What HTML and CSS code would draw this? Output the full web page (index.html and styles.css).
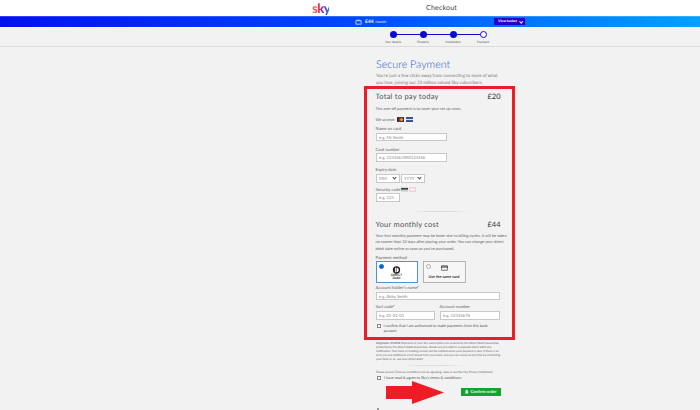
FILE: index.html
```html
<!DOCTYPE html>
<html lang="en">
<head>
    <meta charset="UTF-8">
    <title>Checkout</title>
    <link rel="stylesheet" href="styles.css">
</head>
<body>
    <header class="top">
        <span class="logo">sky</span>
        <span class="top-title">Checkout</span>
    </header>

    <div class="bar">
        <div class="bar-price">
            <svg class="tv" viewBox="0 0 8 6"><path d="M1 1.500h6v4H1zM2.500 0 4 1.500 5.500 0" fill="none" stroke="#fff" stroke-width="0.8"/></svg>
            <b>£44</b><span>/month</span>
        </div>
        <div class="basket">View basket <span class="caret"></span></div>
    </div>

    <nav class="steps">
        <div class="step done"><i></i><span>Your details</span></div>
        <div class="step done"><i></i><span>Property</span></div>
        <div class="step done"><i></i><span>Installation</span></div>
        <div class="step current"><i></i><span>Payment</span></div>
    </nav>

    <main class="page">
        <h1>Secure Payment</h1>
        <p class="intro">You're just a few clicks away from connecting to more of what<br>you love, joining our 23 million valued Sky subscribers.</p>

        <section class="pay-box">
            <div class="total">
                <h2>Total to pay today</h2><strong>£20</strong>
            </div>
            <p class="note">This one-off payment is to cover your set up costs.</p>

            <div class="accept">
                <span>We accept:</span>
                <svg class="card" viewBox="0 0 8 5"><rect width="8" height="5" fill="#222"/><circle cx="3" cy="2.500" r="1.600" fill="#d8232a"/><circle cx="5" cy="2.500" r="1.600" fill="#f39c12"/></svg>
                <svg class="card" viewBox="0 0 8 5"><rect width="8" height="5" fill="#1a2a78"/><rect y="1.700" width="8" height="1.600" fill="#d5ddee"/></svg>
            </div>

            <label class="first">Name on card</label>
            <div class="input w-name">e.g. Mr Smith</div>

            <label>Card number</label>
            <div class="input w-name">e.g. 1234567890123456</div>

            <label>Expiry date</label>
            <div class="expiry">
                <div class="input select">MM <span class="chev"></span></div>
                <div class="input select">YYYY <span class="chev"></span></div>
            </div>

            <label class="security">Security code
                <svg class="cvv" viewBox="0 0 8 5"><rect width="8" height="5" fill="#ccc"/><rect y="1" width="8" height="1.500" fill="#222"/></svg>
                <svg class="cvv" viewBox="0 0 8 5"><rect width="8" height="5" fill="#f3c6d0"/><rect x="1" y="1.500" width="6" height="2" fill="#fff"/></svg>
            </label>
            <div class="input w-short">e.g. 123</div>

            <hr class="rule">

            <div class="total monthly">
                <h2>Your monthly cost</h2><strong>£44</strong>
            </div>
            <p class="note long">Your first monthly payment may be lower due to billing cycles. It will be taken<br>no sooner than 10 days after placing your order. You can change your direct<br>debit date online as soon as you've purchased.</p>

            <label class="method">Payment method</label>
            <div class="tiles">
                <div class="tile selected">
                    <span class="radio on"></span>
                    <svg class="dd" viewBox="0 0 12 8"><circle cx="6" cy="4" r="4" fill="#222"/><path d="M6 1.500a2.500 2.500 0 0 1 0 5z" fill="#fff"/><path d="M4.300 1.500h1v5h-1z" fill="#fff"/></svg>
                    <b class="dd-text">DIRECT<br>Debit</b>
                </div>
                <div class="tile">
                    <span class="radio"></span>
                    <svg class="same" viewBox="0 0 8 6"><rect x="0.400" y="0.400" width="7.200" height="5.200" rx="0.600" fill="none" stroke="#222" stroke-width="0.700"/><rect y="1.300" width="8" height="1.100" fill="#222"/></svg>
                    <b>Use the same card</b>
                </div>
            </div>

            <label class="holder">Account holder's name*</label>
            <div class="input w-full">e.g. Abby Smith</div>

            <div class="two-col">
                <div>
                    <label>Sort code*</label>
                    <div class="input">e.g. 01-01-01</div>
                </div>
                <div>
                    <label>Account number</label>
                    <div class="input">e.g. 12345678</div>
                </div>
            </div>

            <div class="check confirm">
                <span class="box"></span>
                <span>I confirm that I am authorised to make payments from this bank<br>account</span>
            </div>
        </section>

        <div class="below">
            <p class="legal"><b>Originator 374078</b> Payments to your Sky subscription are covered by the Direct Debit Guarantee, protected by the Direct Debit Guarantee. Details are provided in a separate direct debit pre-notification. Your bank or building society will be notified when your payment is due. If there is an error you are entitled to a full refund from your bank, and you can cancel at any time by contacting your bank or us, see your direct debit.</p>
            <hr class="rule small">
            <p class="terms">Please ensure Terms &amp; Conditions are by agreeing, view or see the Sky Privacy Statement</p>
            <div class="check agree">
                <span class="box"></span>
                <span>I have read &amp; agree to Sky's terms &amp; conditions</span>
            </div>
            <div class="order">
                <div class="confirm-btn">
                    <svg class="lock" viewBox="0 0 6 7"><path d="M1.500 3V2a1.500 1.500 0 0 1 3 0v1M.8 3h4.400v4H.8z" fill="#cfeed3" stroke="#cfeed3" stroke-width="0.500"/></svg>
                    Confirm order
                </div>
            </div>
            <div class="more"></div>
        </div>
    </main>

    <!-- callout arrow pointing at the confirm button -->
    <svg class="arrow" viewBox="0 0 58 23"><path d="M0 5h26V0l32 11.500L26 23v-5H0z" fill="#ee1c25"/></svg>
</body>
</html>
```

FILE: styles.css
```css
html, body {
    margin: 0;
    padding: 0;
    height: 410px;
    overflow: hidden;
}

/* geometricPrecision keeps glyph advances fractional at these tiny sizes */
body {
    position: relative;
    font-family: "Lato", Arial, sans-serif;
    text-rendering: geometricPrecision;
    background-color: #f2f2f2;
    color: #555;
}

.top {
    height: 16px;
    background-color: #fff;
    position: relative;
    display: flex;
    align-items: center;
    padding-left: 312px;
}

.logo {
    font-weight: 900;
    font-size: 13px;
    line-height: 14px;
    letter-spacing: -0.5px;
    background: linear-gradient(90deg, #f2822b, #e8246e 45%, #5b3bd6 70%, #1d6fe8);
    -webkit-background-clip: text;
    background-clip: text;
    color: transparent;
    width: 17px;
}

.top-title {
    margin-left: 97px;
    font-size: 7px;
    letter-spacing: 0.2px;
    color: #444;
}

.bar {
    height: 11px;
    background: linear-gradient(90deg, #0010f0, #0047ff 50%, #00a2ff);
    box-shadow: inset 0 1px 0 rgba(255, 255, 255, 0.2);
    border-bottom: 1px solid #fff;
    display: flex;
    align-items: center;
    padding-left: 355px;
    color: #fff;
    font-size: 3.500px;
}

.bar-price {
    display: flex;
    align-items: center;
    width: 139px;
}

.bar-price b {
    font-size: 5px;
    margin: 0 1px 0 3px;
}

.tv {
    width: 7px;
    height: 6px;
}

.basket {
    width: 31px;
    height: 7px;
    box-sizing: border-box;
    background-color: #2400c8;
    font-weight: bold;
    font-size: 3.500px;
    line-height: 7px;
    padding-left: 4px;
    position: relative;
}

.caret {
    position: absolute;
    right: 3px;
    top: 2px;
    width: 1.500px;
    height: 1.500px;
    border-right: 0.5px solid #fff;
    border-bottom: 0.5px solid #fff;
    transform: rotate(45deg);
}

.steps {
    height: 18px;
    border-bottom: 1px solid #dcdcdc;
    display: flex;
    padding-left: 378px;
    background-image: linear-gradient(#0a0ad2, #0a0ad2);
    background-repeat: no-repeat;
    background-size: 90px 1px;
    background-position: 393px 6px;
}

.step {
    width: 30px;
    display: flex;
    flex-direction: column;
    align-items: center;
    font-size: 3.200px;
    color: #555;
}

.step i {
    box-sizing: border-box;
    width: 7px;
    height: 7px;
    margin-top: 3px;
    margin-bottom: 2px;
    border-radius: 50%;
    background-color: #0a0ad2;
}

.step.current i {
    background-color: #fff;
    border: 1px solid #0a0ad2;
}

.page {
    width: 151px;
    margin-left: 364px;
}

h1 {
    margin: 10.500px 0 0 12px;
    font-size: 10.700px;
    line-height: 14px;
    font-weight: 300;
    color: #2a55d0;
}

.intro {
    margin: 0.5px 0 0 12px;
    width: 130px;
    font-size: 4.500px;
    line-height: 7px;
    color: #777;
}

.pay-box {
    box-sizing: border-box;
    width: 151px;
    height: 254px;
    border: 3.500px solid #ee1c25;
    padding: 2px 11.500px 0 8.500px;
    font-size: 4px;
}

.total {
    display: flex;
    justify-content: space-between;
    align-items: center;
    height: 11px;
    color: #555;
}

h2 {
    margin: 0;
    font-size: 7.500px;
    font-weight: 400;
    letter-spacing: 0.25px;
}

.total strong {
    font-size: 7.500px;
    font-weight: 400;
    color: #333;
}

.note {
    margin: 4px 0 0;
    font-size: 3.900px;
    line-height: 6.200px;
    color: #666;
    white-space: nowrap;
}

.accept {
    display: flex;
    align-items: center;
    margin-top: 4.500px;
    height: 6px;
    color: #666;
}

.accept span {
    width: 21px;
}

.card {
    width: 7.500px;
    height: 5px;
    margin-right: 1.500px;
}

label {
    display: block;
    font-size: 4.200px;
    line-height: 5px;
    color: #666;
    margin-top: 5.500px;
    margin-bottom: 1.500px;
}

label.first {
    margin-top: 3.500px;
}

.input {
    box-sizing: border-box;
    height: 8.500px;
    line-height: 7px;
    padding-left: 2.500px;
    background-color: #fff;
    border: 0.75px solid #c8c8c8;
    font-size: 4.200px;
    color: #888;
}

.w-name {
    width: 71px;
}

.w-short {
    width: 24px;
}

.w-full {
    width: 124px;
}

.expiry {
    display: flex;
    gap: 1px;
}

.select {
    width: 24px;
    height: 9px;
    position: relative;
}

.chev {
    position: absolute;
    right: 3px;
    top: 1.500px;
    width: 2px;
    height: 2px;
    border-right: 0.6px solid #444;
    border-bottom: 0.6px solid #444;
    transform: rotate(45deg);
}

.security {
    display: flex;
    align-items: center;
    gap: 1px;
    margin-top: 4px;
    margin-bottom: 1.500px;
}

.cvv {
    width: 7px;
    height: 5px;
}

.rule {
    border: none;
    height: 1px;
    margin: 9.500px auto 0 34px;
    width: 60px;
    background: linear-gradient(90deg, transparent, #dcdcdc 30%, #dcdcdc 70%, transparent);
}

.monthly {
    margin-top: 7px;
}

.note.long {
    margin-top: 3px;
}

label.method {
    margin-top: 3px;
    margin-bottom: 1px;
}

.tiles {
    display: flex;
    gap: 5px;
}

.tile {
    position: relative;
    box-sizing: border-box;
    width: 43px;
    height: 22px;
    border: 1px solid #b4b4b4;
    display: flex;
    flex-direction: column;
    align-items: center;
    justify-content: flex-end;
    padding-bottom: 3px;
    font-size: 3.800px;
    color: #333;
    background-color: #f6f6f6;
}

.tile.selected {
    width: 42px;
    background-color: #fff;
    border: 1px solid #4a94d8;
    padding-bottom: 1.500px;
}

.radio {
    position: absolute;
    left: 2.500px;
    top: 2.500px;
    width: 3px;
    height: 3px;
    border-radius: 50%;
    border: 0.5px solid #aaa;
    background-color: #fff;
}

.radio.on {
    border-color: #1268c8;
    background-color: #1268c8;
}

.dd {
    width: 11px;
    height: 8px;
}

.dd-text {
    font-size: 3.200px;
    line-height: 3.400px;
    text-align: center;
    color: #222;
}

.same {
    width: 7px;
    height: 6px;
    margin-bottom: 3px;
}

label.holder {
    margin-top: 2.500px;
}

.two-col {
    display: grid;
    grid-template-columns: 59px 60px;
    gap: 5px;
    margin-top: 4px;
}

.two-col label {
    margin-top: 0;
    margin-bottom: 2px;
}

.check {
    display: flex;
    align-items: flex-start;
    gap: 3px;
    line-height: 5.500px;
    font-size: 3.750px;
    color: #555;
}

.box {
    flex: none;
    box-sizing: border-box;
    width: 4px;
    height: 4px;
    border: 0.5px solid #888;
    background-color: #fff;
    margin-top: 1px;
}

.confirm {
    margin-top: 3px;
    padding-left: 1px;
}

.below {
    padding: 1px 14px 0 12px;
}

.legal {
    margin: 0;
    font-size: 2.900px;
    line-height: 4px;
    color: #666;
}

.rule.small {
    margin: 4px 0 0 28px;
}

.terms {
    margin: 4px 0 0;
    font-size: 3px;
    line-height: 4px;
    color: #666;
}

.agree {
    margin-top: 0.5px;
    padding-left: 1px;
}

.order {
    display: flex;
    justify-content: flex-end;
    margin-top: 7.500px;
}

.confirm-btn {
    width: 40px;
    height: 8.500px;
    background-color: #12a52a;
    color: #e8f8ea;
    font-size: 4.200px;
    font-weight: 700;
    display: flex;
    align-items: center;
    justify-content: center;
    gap: 1.500px;
}

.lock {
    width: 3.500px;
    height: 5px;
}

/* top of the next line, cut off by the window */
.more {
    width: 2px;
    height: 2px;
    margin: 12px 0 0 1px;
    background-color: #999;
}

/* sits over the page, so it is placed by hand */
.arrow {
    position: absolute;
    left: 386px;
    top: 381px;
    width: 58px;
    height: 23px;
}
```
